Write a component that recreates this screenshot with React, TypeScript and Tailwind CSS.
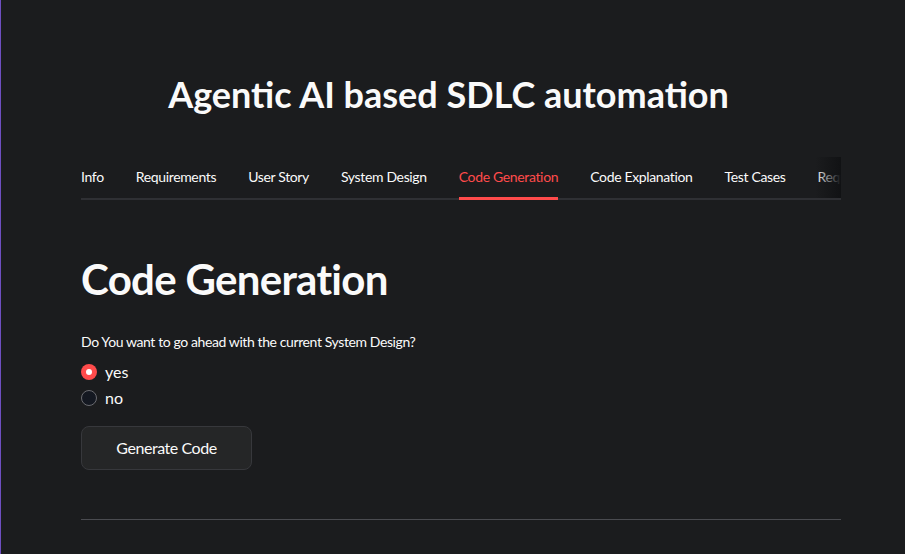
import React, { useState } from 'react';

const tabs = [
  'Info',
  'Requirements',
  'User Story',
  'System Design',
  'Code Generation',
  'Code Explanation',
  'Test Cases',
  'Requirements Review',
];

const font = "font-['Lato','Liberation_Sans',sans-serif]";

const App: React.FC = () => {
  const [active] = useState('Code Generation');
  const [choice, setChoice] = useState('yes');

  return (
    <div className={`min-h-[554px] w-full bg-[#1b1c1e] border-l border-[#6e4fc0] text-[#fafafa] ${font}`}>
      <div className="ml-[80px] w-[760px] pt-[70px]">
        {/* Title */}
        <h1 className="pr-[25px] text-center text-[36px] font-bold leading-[48px]">
          Agentic AI based SDLC automation
        </h1>

        {/* Tabs */}
        <div className="relative mt-[39px] overflow-hidden pt-[10px]">
          <div className="flex gap-8 whitespace-nowrap border-b-2 border-[#2f3034]">
            {tabs.map((t) => (
              <div
                key={t}
                className={`relative pb-[11px] text-[14px] leading-[20px] tracking-[-0.35px] ${
                  t === active ? 'text-[#ff4b4b]' : 'text-[#fafafa]'
                }`}
              >
                {t}
                {t === active && (
                  <div className="absolute bottom-[-2px] left-0 right-0 h-[3px] bg-[#ff4b4b]" />
                )}
              </div>
            ))}
          </div>
          {/* scroll fade */}
          <div className="absolute bottom-[2px] right-0 top-0 w-[26px] bg-gradient-to-r from-transparent to-[#111214]" />
        </div>

        {/* Section */}
        <h2 className="mt-[53px] text-[42px] font-bold leading-[52px] tracking-[-0.7px]">Code Generation</h2>

        <p className="mt-[27px] text-[14px] leading-[20px] tracking-[-0.4px]">
          Do You want to go ahead with the current System Design?
        </p>

        <div className="mt-[12px] flex flex-col gap-[10px]">
          {['yes', 'no'].map((o) => (
            <label key={o} className="flex cursor-pointer items-center gap-2 text-[16px] leading-[16px]">
              <span
                onClick={() => setChoice(o)}
                className={`flex h-4 w-4 items-center justify-center rounded-full ${
                  choice === o ? 'bg-[#ff4b4b]' : 'border border-[#6a6b70] bg-[#141821]'
                }`}
              >
                {choice === o && <span className="h-[6px] w-[6px] rounded-full bg-white" />}
              </span>
              {o}
            </label>
          ))}
        </div>

        <button className="mt-[20px] h-[44px] w-[171px] rounded-lg border border-[#37383c] bg-[#252627] text-[16px] tracking-[-0.45px] text-[#fafafa]">
          Generate Code
        </button>

        <div className="mt-[49px] h-px bg-[#4a4b50]" />
      </div>
    </div>
  );
};

export default App;
